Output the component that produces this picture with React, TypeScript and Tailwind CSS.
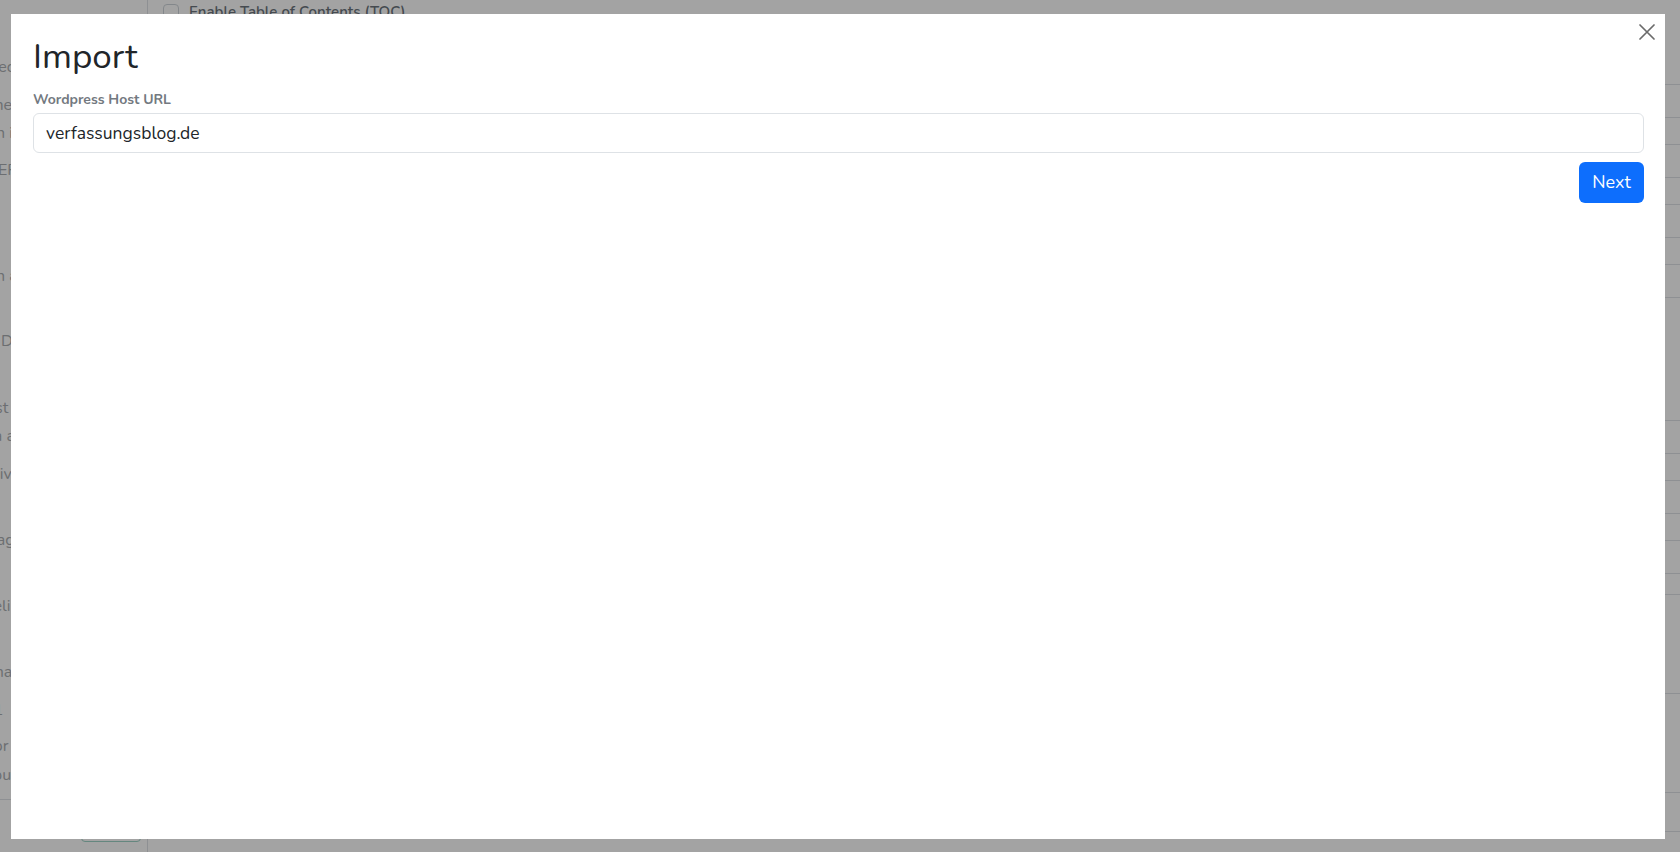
import React from 'react';

const sideItems: { text: string; cls: string }[] = [
  { text: 'Embed defaults', cls: 'mt-[55px]' },
  { text: 'Banner image', cls: 'mt-[14px]' },
  { text: 'Open in new tab', cls: 'mt-[4px]' },
  { text: 'Use EPUB export', cls: 'mt-[13px]' },
  { text: 'Open annotations', cls: 'mt-[82px]' },
  { text: 'PDF Download', cls: 'mt-[41px]' },
  { text: 'Guest comments', cls: 'mt-[43px]' },
  { text: 'Meta author', cls: 'mt-[4px]' },
  { text: 'Archive', cls: 'mt-[14px]' },
  { text: 'Auflage', cls: 'mt-[42px]' },
  { text: 'Timeline', cls: 'mt-[42px]' },
  { text: 'Journal', cls: 'mt-[42px]' },
  { text: 'Tite1', cls: 'mt-[14px]' },
  { text: 'Editor', cls: 'mt-[12px]' },
  { text: 'Output', cls: 'mt-[5px]' },
];

function BackgroundPage() {
  return (
    <div className="flex h-[852px] w-full overflow-hidden bg-white">
      <aside className="flex w-[148px] shrink-0 flex-col border-r border-[#dee2e6]">
        <div className="-ml-[34px] flex flex-col text-[16px] leading-[24px] text-[#a9adb1]">
          {sideItems.map((item) => (
            <span key={item.text} className={`${item.cls} whitespace-nowrap`}>
              {item.text}
            </span>
          ))}
        </div>
        <div className="mt-auto border-t border-[#dee2e6] pb-[10px] pl-[81px] pt-[2px]">
          <button className="h-[40px] w-[60px] rounded border border-[#9fd3c7] text-[16px] text-[#6fae9f]">
            Add
          </button>
        </div>
      </aside>
      <main className="-mr-[40px] flex flex-1 flex-col pl-[15px]">
        <label className="mt-[1px] flex items-center gap-[10px] text-[15px] font-semibold text-[#6c757d]">
          <span className="h-[16px] w-[16px] rounded-[4px] border border-[#ced4da] bg-white" />
          Enable Table of Contents (TOC)
        </label>
        <div className="mt-[60px] flex flex-col gap-[26px]">
          {[0, 1, 2, 3].map((i) => (
            <div key={i} className="h-[34px] rounded-md border border-[#dee2e6]" />
          ))}
        </div>
        <div className="mt-[122px] flex flex-col gap-[26px]">
          {[0, 1, 2].map((i) => (
            <div key={i} className="h-[34px] rounded-md border border-[#dee2e6]" />
          ))}
        </div>
        <div className="mt-[20px] h-[29px] border-t border-[#dee2e6]" />
        <div className="mt-[70px] h-[79px] border-t border-[#dee2e6]" />
        <div className="mt-[20px] h-[40px] rounded-md border border-[#dee2e6]" />
      </main>
    </div>
  );
}

export default function App() {
  return (
    <div className="relative h-[852px] w-full overflow-hidden font-['Nunito','Lato',sans-serif]">
      <BackgroundPage />
      <div className="fixed inset-0 flex bg-black/[0.36] pb-[13px] pl-[11px] pr-[15px] pt-[14px]">
        <div className="relative flex flex-1 flex-col bg-white pl-[22px] pr-[21px] pt-[22px]">
          <button
            className="absolute right-[8px] top-[8px] flex h-[20px] w-[20px] items-center justify-center"
            title="Close"
          >
            <svg width="16" height="16" viewBox="0 0 16 16" fill="none">
              <path d="M1 1L15 15M15 1L1 15" stroke="#6b6b6b" strokeWidth="1.7" strokeLinecap="round" />
            </svg>
          </button>
          <h1 className="text-[35px] font-normal leading-[42px] text-[#212529]">Import</h1>
          <label className="mt-[12px] block text-[14px] font-bold leading-[20px] text-[#737980]">
            Wordpress Host URL
          </label>
          <input
            className="mt-[3px] h-[40px] w-full rounded-md border border-[#dee2e6] bg-white px-[12px] text-[17.5px] text-[#212529] outline-none"
            defaultValue="verfassungsblog.de"
          />
          <div className="mt-[9px] flex justify-end">
            <button className="h-[41px] w-[65px] rounded-md bg-[#0d6efd] text-[18px] text-white">Next</button>
          </div>
        </div>
      </div>
    </div>
  );
}
